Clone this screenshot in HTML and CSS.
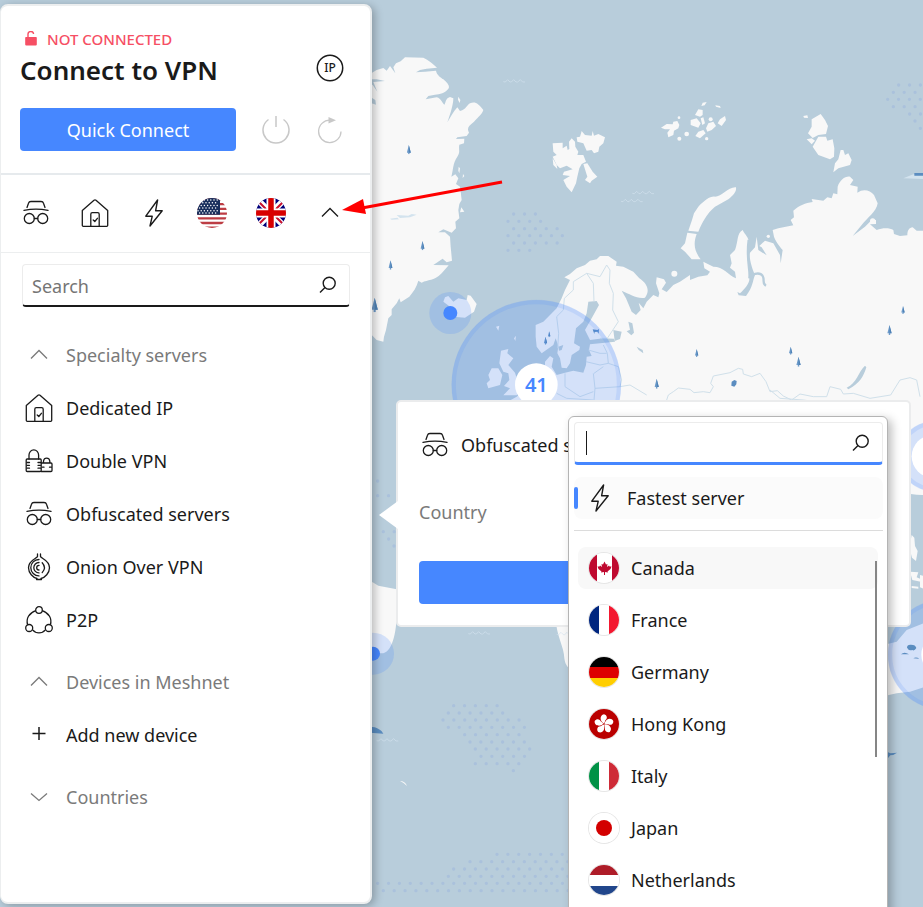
FILE: index.html
```html
<!DOCTYPE html>
<html lang="en">
<head>
<meta charset="utf-8">
<meta name="viewport" content="width=device-width, initial-scale=1">
<title>Connect to VPN</title>
<link rel="stylesheet" href="styles.css">
</head>
<body>

<svg class="defs" aria-hidden="true">
  <defs>
    <clipPath id="disc"><circle cx="16" cy="16" r="15"/></clipPath>
    <symbol id="i-hat" viewBox="0 0 28 28"><g fill="none" stroke="currentColor" stroke-width="1.3" stroke-linecap="round" stroke-linejoin="round"><path d="M5 8.500 6.500 4.200Q7 2.500 9 2.500H19Q21 2.500 21.500 4.200L23 8.500M2 11.400C9 9.900 19 9.900 26 11.400"/><circle cx="7.300" cy="19.500" r="5"/><circle cx="20.700" cy="19.500" r="5"/><path d="M12.300 19.500h3.400"/></g></symbol>
    <symbol id="i-house" viewBox="0 0 28 28"><g fill="none" stroke="currentColor" stroke-width="1.300" stroke-linecap="round" stroke-linejoin="round"><path d="M1.300 11.500V26.500Q1.300 27.300 2.300 27.300H25.700Q26.700 27.300 26.700 26.500V11.500L15 1.200Q14 .4 13 1.200Z"/><path d="M9.800 27V15.200Q9.800 13.700 11.300 13.700H16.700Q18.200 13.700 18.200 15.200V27M12.200 21l1.600 1.500 2.600-3.200"/></g></symbol>
    <symbol id="i-bolt" viewBox="0 0 28 28"><path d="M17.600 1 5.800 17.200 12.200 17.300 10 27 22.200 11.700 15.600 11.800Z" fill="none" stroke="currentColor" stroke-width="1.400" stroke-linejoin="round"/></symbol>
    <symbol id="i-locks" viewBox="0 0 28 28"><g fill="none" stroke="currentColor" stroke-width="1.300" stroke-linecap="round" stroke-linejoin="round"><rect x="1.200" y="12" width="15" height="12.500" rx="1"/><path d="M4 12V8a4.800 5.200 0 0 1 9.600 0V12M2 15.500h2.500M2 18.300h2.500M2 21.200h2.500M13 15.500h2.500M13 18.300h2.500M13 21.200h2.500"/><path d="M16.300 16H26a1 1 0 0 1 1 1v6.500a1 1 0 0 1-1 1H16.300M18.500 16V14a3.200 3.400 0 0 1 6.300 0v2M17.500 20.200h1.500M24.500 20.200h1.500"/></g></symbol>
    <symbol id="i-onion" viewBox="0 0 28 28"><g fill="none" stroke="currentColor" stroke-width="1.300" stroke-linecap="round"><path d="M12.500 1V3.500C12 5.500 3.500 7 3.500 14.800 3.500 20 8 24.500 12 25.500M15.500 1V3.500C16 5.500 24.500 7 24.500 14.800 24.500 20 20 24.500 16 25.500M11.500 26.500h5M14 6.500a8.200 8.200 0 0 0 0 16.400M14 9.500a5.200 5.200 0 0 0 0 10.400M14 12.400a2.300 2.300 0 0 0 0 4.600M17.200 9.800c2.800 3 2.800 6.700 0 9.800"/></g></symbol>
    <symbol id="i-p2p" viewBox="0 0 28 28"><g fill="none" stroke="currentColor" stroke-width="1.300"><circle cx="14" cy="4" r="3.300"/><circle cx="4.200" cy="22" r="3.500"/><circle cx="23.800" cy="22" r="3.500"/><path d="M10.800 4.600C4 7 .800 12.500 2.600 18.800M17.200 4.600C24 7 27.200 12.500 25.400 18.800M7.600 23.800C11 27.800 17 27.800 20.400 23.800"/></g></symbol>
    <symbol id="i-up" viewBox="0 0 28 28"><path d="M6 17.500 14 9.500 22 17.500" fill="none" stroke="currentColor" stroke-width="1.300"/></symbol>
    <symbol id="i-down" viewBox="0 0 28 28"><path d="M6 10.500 14 17.500 22 10.500" fill="none" stroke="currentColor" stroke-width="1.300"/></symbol>
    <symbol id="i-plus" viewBox="0 0 28 28"><path d="M7.500 12.500h13M14 6v13" fill="none" stroke="currentColor" stroke-width="1.500"/></symbol>
    <symbol id="i-search" viewBox="0 0 20 20"><g fill="none" stroke="currentColor" stroke-width="1.400"><circle cx="11.200" cy="8.300" r="6"/><path d="M7 12.500 2 17.500"/></g></symbol>
    <symbol id="f-ca" viewBox="0 0 32 32"><g clip-path="url(#disc)"><path fill="#fff" d="M0 0h32v32H0z"/><path fill="#bf0a30" d="M0 0h9v32H0zM24 0h8v32h-8z"/><path fill="#bf0a30" d="M16.500 9.500 18 12.500 19.500 12 19 15 21 13.500 21.500 14.500 23.500 14.500 22.500 17 19.500 19.500 20 20.500 17 20 17 23H16L16 20 13 20.500 13.500 19.500 10.500 17 9.500 14.500 11.500 14.500 12 13.500 14 15 13.500 12 15 12.500Z"/></g></symbol>
    <symbol id="f-fr" viewBox="0 0 32 32"><g clip-path="url(#disc)"><path fill="#fff" d="M0 0h32v32H0z"/><path fill="#00267f" d="M0 0h11v32H0z"/><path fill="#f31830" d="M21 0h11v32H21z"/></g></symbol>
    <symbol id="f-de" viewBox="0 0 32 32"><g clip-path="url(#disc)"><path d="M0 0h32v11H0z"/><path fill="#d00" d="M0 11h32v11H0z"/><path fill="#ffce00" d="M0 22h32v10H0z"/></g></symbol>
    <symbol id="f-hk" viewBox="0 0 32 32"><g clip-path="url(#disc)"><path fill="#ba0000" d="M0 0h32v32H0z"/><g fill="#fff"><path id="petal" d="M16 15.500C11.500 13 11.500 7 16 6.200 19.500 7 19.500 11 17.500 12 17 13 17 14 16 15.500Z"/><use href="#petal" transform="rotate(72 16 16)"/><use href="#petal" transform="rotate(144 16 16)"/><use href="#petal" transform="rotate(216 16 16)"/><use href="#petal" transform="rotate(288 16 16)"/></g></g></symbol>
    <symbol id="f-it" viewBox="0 0 32 32"><g clip-path="url(#disc)"><path fill="#fff" d="M0 0h32v32H0z"/><path fill="#009246" d="M0 0h11v32H0z"/><path fill="#ce2b37" d="M21 0h11v32H21z"/></g></symbol>
    <symbol id="f-jp" viewBox="0 0 32 32"><circle cx="16" cy="16" r="15" fill="#fff"/><circle cx="16" cy="16" r="8" fill="#d30000"/></symbol>
    <symbol id="f-nl" viewBox="0 0 32 32"><g clip-path="url(#disc)"><path fill="#fff" d="M0 0h32v32H0z"/><path fill="#ae1c28" d="M0 0h32v11H0z"/><path fill="#21468b" d="M0 22h32v10H0z"/></g></symbol>
    <symbol id="f-us" viewBox="0 0 32 32"><g clip-path="url(#disc)"><path fill="#fff" d="M0 0h32v32H0z"/><path stroke="#bd3d44" stroke-width="2.300" d="M0 2.500h32M0 7.200h32M0 11.900h32M0 16.600h32M0 21.300h32M0 26h32M0 30.700h32"/><path fill="#192f5d" d="M0 0h24v17.700H0z"/><path stroke="#fff" stroke-width="1.500" stroke-linecap="round" stroke-dasharray="0 3.200" d="M2 3h21M3.600 5.700h19M2 8.400h21M3.600 11.100h19M2 13.800h21M3.600 16h19"/></g></symbol>
    <symbol id="f-gb" viewBox="0 0 32 32"><g clip-path="url(#disc)"><path fill="#00007a" d="M0 0h32v32H0z"/><path stroke="#fff" stroke-width="6" d="M0 0 32 32M32 0 0 32"/><path stroke="#c8102e" stroke-width="2" d="M0 1 15 16M32 1 17 16M0 31 15 16M32 31 17 16"/><path stroke="#fff" stroke-width="9" d="M16 0v32M0 16h32"/><path stroke="#d80000" stroke-width="5.500" d="M16 0v32M0 16h32"/></g></symbol>
    <symbol id="tree" viewBox="0 0 12 28"><path fill="#6f9ccb" d="M6 0 12 23H8v5H4v-5H0Z"/><path fill="#4f82b6" d="M6 0 12 23H6Z"/></symbol>
    <path id="wave" d="M0 6 6 7 13 0 20 7 24 7 31 0 38 7 43 7 51 0 58 7 65 7"/>
  </defs>
</svg>

<svg class="map" viewBox="-1110 0 2769 2721" preserveAspectRatio="xMinYMin slice" role="img" aria-label="Server map">
  <g class="land">
    <path d="M-20 235 0 222 20 210 40 204 50 212 60 198 76 220 70 202 78 190 92 184 105 172 160 173C175 180 190 192 201 203L170 206 150 210 138 217 165 215 198 212C200 225 212 232 220 238 235 250 240 260 235 266 225 280 210 282 195 284L175 288 167 298 200 292C215 296 215 308 223 314 228 310 225 295 240 291L250 295C250 315 240 345 232 367 240 355 250 335 262 322L270 333C290 328 290 315 300 310 315 303 325 310 340 330 335 345 325 350 312 365 295 378 290 385 297 398L290 408 262 412 258 417 283 416 282 430 268 434C265 450 272 455 262 470 248 490 250 510 244 530L256 523 265 535 258 552 270 560 275 600 268 612 265 630 268 655 256 665 258 685 245 698 220 688 205 697 225 697 240 710 242 740 246 782 230 787 205 765 195 752 210 753 220 775 190 795 236 796 215 820 C190 845 175 838 155 848L145 842C140 862 130 875 118 890L92 907 88 895 80 910 65 928 65 945 55 955 48 990 42 1010 40 1025 20 1020 0 1000-20 990Z"/>
    <path d="M265 290l6 10-2 9-5-10zM266 500l4 5-2 15-3-8zM279 522l4 6-5 6zM268 575l4 5v18l-4-8zM274 622l9 13-13 2z"/>
    <path d="M548 430 578 428 578 445 590 437 593 450 598 447 597 425 605 415 615 425 616 440 625 455 622 465 640 465 648 485 635 492 628 505 622 530 618 550 605 577 590 560 580 540 600 528 578 525 582 515 608 508 590 497 570 505 560 495 548 470 560 465 550 455z"/>
    <path d="M620 412 630 410 635 393 645 405 665 407 668 393 672 407 685 402 705 412 700 430 688 440 685 455 672 460 665 450 650 452 640 430 622 425zM640 492 652 490 668 515 682 530 665 542 660 550 645 540 652 530zM548 475l12 20 2 12-12-12z"/>
    <path d="M497 975 520 965 540 945 560 925 575 895 585 870 600 840 583 832 600 822 620 805 645 795 660 782 680 778 690 768 715 768 740 785 738 797 760 800 790 815 808 835C830 850 842 870 825 893 800 897 780 882 755 872L768 895 785 935 798 945 812 930 806 908 820 925 830 905 850 885 865 892 868 880 858 850 860 832 882 838 888 848 875 868 890 876 910 855 930 845 960 825 960 840 985 830 1012 826 1020 815 1003 805 1000 785 1030 800C1060 800 1075 825 1098 835L1095 815 1080 803 1085 790 1080 765 1095 750C1105 725 1100 700 1118 690 1125 705 1138 712 1136 730 1128 780 1140 810 1138 835 1140 850 1122 870 1110 880L1102 876 1106 886 1128 888C1150 860 1148 840 1155 825 1140 790 1138 770 1140 758L1155 742 1160 710 1165 750 1190 766 1175 742 1168 738 1185 722 1210 730 1230 765 1232 790 1238 750C1225 735 1215 720 1212 710L1208 690 1225 685 1270 676 1262 660 1272 652 1270 632C1290 615 1305 610 1328 606L1325 597 1360 602 1372 592 1385 595 1390 580 1402 583 1403 560C1410 540 1425 528 1440 530L1450 540 1440 555 1463 560 1462 578C1480 565 1500 570 1512 585L1523 610C1520 635 1490 655 1475 675L1448 708 1485 680 1505 660 1518 660 1518 672 1500 673 1520 690 C1540 682 1560 684 1570 690L1572 702 1590 708 1612 706C1612 690 1618 683 1628 682L1640 692 1800 692 1800 1500 1620 1500 1560 1400 440 1400 440 1230 400 1212 440 1190 500 1130 525 1110 525 1085 540 1068 550 1075 545 1100 560 1125 585 1118 610 1112 640 1118 648 1095 650 1070 665 1068 657 1050 660 1033 735 1025 732 1016 700 1015 660 1020 645 990 665 955 687 915 680 903 655 905 650 940 640 965 618 985 612 1030 630 1040 628 1050 605 1065 600 1090 590 1105 575 1103 570 1075 562 1060 565 1038 557 1015 550 1035 515 1060 500 1040 497 1010Z"/>
    <path d="M1098 562C1100 575 1090 585 1075 598L1035 620C1010 640 995 670 985 695L955 692 966 660 972 640 985 620C1005 600 1020 588 1035 590 1055 590 1075 560 1098 562zM952 698 980 702C968 735 975 755 992 778L965 778 945 755 932 745 945 730z"/>
    <path d="M1352 342 1365 360 1374 378 1368 402 1345 405 1328 414 1314 400 1325 380 1325 358zM1345 410 1368 410 1372 422 1388 418 1393 445 1392 470 1380 478 1345 465 1328 440zM1412 450 1420 450 1425 465 1435 460 1445 480 1440 495 1405 505 1390 517 1395 490 1405 478zM1310 418 1325 415 1335 422 1325 433zM1300 348l12-2 2 8-12-1z"/>
    <path d="M873 383 890 372 908 373 910 365 922 363 928 375 925 385 912 392 910 405 895 412 892 398 900 388 885 388zM975 345 985 328 998 330 998 345 990 350zM962 360 980 355 992 370 985 383 962 375zM992 355l8-3 5 18-8 5zM1008 385 1015 370 1030 365 1038 378 1025 390 1012 395zM1043 370 1050 358 1065 348 1068 360 1055 378zM976 408 985 395 1000 390 1007 400 990 415zM998 308l12-2-6 10-10 2zM1036 316l14 2 2 6-14-4z"/>
    <circle cx="950" cy="402" r="7"/><circle cx="1010" cy="416" r="5"/><circle cx="928" cy="416" r="6"/><circle cx="927" cy="353" r="4"/><circle cx="1022" cy="358" r="6"/><circle cx="913" cy="821" r="9"/><circle cx="1195" cy="709" r="5"/><circle cx="1508" cy="663" r="8"/>
    <path d="M220 905 225 892 235 888 250 905 265 895 290 900 293 885 302 887 320 912 312 935 285 953 250 950 225 930 240 920z"/>
    <path d="M393 1052 415 1047 412 1060 430 1075 415 1095 435 1118 445 1150 455 1170 440 1186 400 1186 420 1165 402 1158 418 1140 415 1120 400 1115 388 1090zM355 1125 365 1105 385 1105 397 1125 390 1155 355 1165 350 1150 360 1140zM378 980l10-3-3 15zM432 1015l6-8-2 16z"/>
    <path d="M-20 1745 8 1747 25 1757 80 1768C85 1870 75 1950 40 1960L-20 1960ZM558 1850C555 1900 583 1940 583 1975 586 2000 597 2000 600 2015H900V1850Z"/>
  </g>
  <path class="water" d="M730 990l25 5-5 22-16 6zM775 965l12 5 5 28-8 8-14-12 10-5zM800 1040l18 10 2 10-14-10zM-20 238 20 238 45 243 10 246 22 275 8 255zM0 290l16 10 2 14-18-6zM1485 1097l4 5C1480 1130 1470 1150 1435 1168L1430 1163C1460 1150 1465 1115 1485 1097zM565 1040l15-5-5 15-8 2z"/>
  <path class="inlet" d="M1145 825Q1170 815 1178 828C1185 840 1175 850 1188 857M1136 720C1128 780 1142 810 1138 835"/>
  <path class="borders" d="M563 1045 566 1000 560 950 580 930 583 895 610 870 610 845 650 820 670 850 672 905M650 820 690 830 710 795 720 810 718 850 730 880 728 930 745 965 712 1015 690 1015M700 1035 712 1060 715 1090 745 1100 755 1140 750 1160 675 1165 672 1200M655 1050 690 1060 710 1060M648 1085 690 1095 715 1090M670 1120 675 1165M700 1100 672 1120M585 1120 585 1160 630 1190 670 1175M560 1180 590 1195 670 1200M750 1160 780 1155 830 1185"/>
  <path class="borders" d="M890 1200 895 1185 910 1175 925 1164 960 1168 972 1178 1000 1175 1020 1178 1030 1160 1022 1150 1030 1128 1080 1118 1105 1105 1118 1108 1120 1122 1145 1130 1170 1120 1188 1145 1200 1175 1222 1172 1240 1188 1265 1200 1290 1182 1330 1190 1370 1190 1380 1160 1412 1168 1420 1182 1450 1180 1500 1195 1562 1185 1590 1140 1620 1133 1640 1140 1650 1190M860 1200 905 1250M1200 1170 1230 1195 1300 1200 1370 1210"/>
  <path class="dots" d="M431 642h66M414 664h99M431 686h131M414 707h164M431 729h131M414 751h66M251 2117h131M235 2139h164M219 2160h229M235 2182h229M284 2204h164M300 2226h164M316 2247h164M333 2269h131M316 2291h131M430 2312h1M381 2563h300M300 2585h300M251 2607h400M235 2629h400M23 2650h600M40 2672h600M1586 255h66M1570 277h66M1553 298h99M1570 320h99M1619 342h34M1635 363h1M1651 385h1M23 1443h1M23 1487h34M40 1595h34M56 1617h1M72 1638h1M1652 2433h1M1636 2455h1M1571 2476h66M1587 2498h66M1571 2520h66M1587 2541h66M1571 2563h66M1587 2585h66M1571 2606h66M1587 2628h66M1571 2650h66M1571 2672h66"/>
  <g class="waves"><use href="#wave" x="400" y="239"/><use href="#wave" x="787" y="574"/><use href="#wave" x="753" y="598"/><use href="#wave" x="295" y="1895"/><use href="#wave" x="20" y="2216"/><use href="#wave" x="560" y="1897"/></g>
  <path fill="#d3e3ee" d="M60 656l22-3 5 5-22 1zM80 645l35 2 10-5 15 2-20 8-30 2zM1600 535l30-12h30v14z"/>
  <path fill="#5b8dc0" d="M1633 519h30v8h-30zM1085 1145l8-5 7 3-1 10-6 7-9-3zM668 988l14 2 5-3-1 14-4-6-8 1-1 6-3-8zM0 2180C20 2180 35 2190 40 2201L20 2200 0 2198Z"/>
  <path fill="#f8f8f8" d="M90 2343q15 0 21 15-6-8-21-15z"/>
  <g><use href="#tree" x="110" y="435" width="13" height="28"/><use href="#tree" x="151" y="723" width="13" height="28"/><use href="#tree" x="55" y="781" width="13" height="28"/><use href="#tree" x="4" y="893" width="20" height="44"/><use href="#tree" x="521" y="1010" width="11" height="24"/><use href="#tree" x="533" y="994" width="9" height="18"/><use href="#tree" x="1593" y="918" width="12" height="24"/><use href="#tree" x="1551" y="975" width="15" height="30"/><use href="#tree" x="1256" y="1040" width="12" height="24"/><use href="#tree" x="1278" y="1070" width="15" height="30"/><use href="#tree" x="974" y="1047" width="12" height="24"/><use href="#tree" x="853" y="1136" width="14" height="30"/></g>
  <path class="water" d="M1500 1440Q1620 1500 1700 1480V2721H1540V2060H1500Z"/>
  <path class="land" d="M1625 1605l8 8 2 25 8 15-5 30-12-10-8-30zM1620 1715l25 2-5 15 12 5v8l-25-5zM1650 1725l20 5v40l-20-8zM1625 1758l20 2v6l-20-2zM1540 1935 1580 1925 1610 1890 1660 1870 1700 1890V2050L1620 2075 1580 2080 1540 2089Z"/>
  <g fill="#4687ff">
    <g fill-opacity=".2"><circle cx="241" cy="939" r="63"/><circle cx="499" cy="1154" r="254"/><circle cx="9" cy="1961" r="63"/><circle cx="1689" cy="1369" r="104"/><circle cx="1718" cy="1964" r="164"/></g>
    <circle cx="241" cy="939" r="21"/><circle cx="9" cy="1961" r="21"/>
    <g class="rings"><circle cx="499" cy="1154" r="248"/><circle cx="1689" cy="1369" r="98"/><circle cx="1718" cy="1964" r="158"/></g>
  </g>
  <path fill="#5b8dc0" d="M1593 1963q10-10 24 0zM1630 1975q8-6 18 1zM1611 1943q0-10 12-9 14 0 16 10-6 10-12 6-10 4-16-7zM1551 2255l10 5 20-2q-10 8-20 8l-10 12z"/>
  <g fill="#fff"><circle cx="499" cy="1154" r="64"/><circle cx="1689" cy="1369" r="64"/><circle cx="1718" cy="1964" r="64"/></g>
  <text class="cluster" x="499" y="1176" text-anchor="middle">41</text>
</svg>

<main class="app">
  <section class="panel">
    <header class="head">
      <div class="status"><svg viewBox="0 0 12 16" aria-hidden="true"><path d="M1 6h10a.8.8 0 0 1 .8.800V13.500a1 1 0 0 1-1 1H1.200a1 1 0 0 1-1-1V6.800A.8.8 0 0 1 1 6z" fill="currentColor"/><path d="M3 6.500V3.600A2.800 2.800 0 0 1 8.600 3" fill="none" stroke="currentColor" stroke-width="1.400"/></svg>NOT CONNECTED</div>
      <div class="title-row">
        <h1>Connect to VPN</h1>
        <button class="icon-btn" aria-label="IP address"><svg viewBox="0 0 28 28"><circle cx="14" cy="14" r="12.700" fill="none" stroke="currentColor" stroke-width="1.500"/><text class="ip" x="14" y="18" text-anchor="middle">IP</text></svg></button>
      </div>
      <div class="action-row">
        <button class="primary">Quick Connect</button>
        <button class="icon-btn muted" aria-label="Disconnect"><svg viewBox="0 0 28 28"><path d="M6.500 3.500A13 13 0 1 0 21.500 3.500M14 0V11" fill="none" stroke="currentColor" stroke-width="1.500"/></svg></button>
        <button class="icon-btn muted" aria-label="Reconnect"><svg viewBox="0 0 28 28"><path d="M25 15.500A11.200 11.200 0 1 1 14 4.200" fill="none" stroke="currentColor" stroke-width="1.300"/><path d="M12.500 1 20 4.200 12.500 7.500Z" fill="currentColor"/></svg></button>
      </div>
    </header>

    <nav class="shortcuts" aria-label="Shortcuts">
      <button class="icon-btn" aria-label="Obfuscated servers"><svg><use href="#i-hat"/></svg></button>
      <button class="icon-btn" aria-label="Dedicated IP"><svg><use href="#i-house"/></svg></button>
      <button class="icon-btn" aria-label="Fastest server"><svg><use href="#i-bolt"/></svg></button>
      <button class="icon-btn" aria-label="United States"><svg class="flag"><use href="#f-us"/></svg></button>
      <button class="icon-btn" aria-label="United Kingdom"><svg class="flag"><use href="#f-gb"/></svg></button>
      <button class="icon-btn" aria-label="Collapse"><svg><use href="#i-up"/></svg></button>
    </nav>

    <div class="search">
      <input type="text" placeholder="Search" aria-label="Search">
      <svg aria-hidden="true"><use href="#i-search"/></svg>
    </div>

    <div class="list">
      <button class="row group"><svg><use href="#i-up"/></svg>Specialty servers</button>
      <button class="row"><svg><use href="#i-house"/></svg>Dedicated IP</button>
      <button class="row"><svg><use href="#i-locks"/></svg>Double VPN</button>
      <button class="row"><svg><use href="#i-hat"/></svg>Obfuscated servers</button>
      <button class="row"><svg><use href="#i-onion"/></svg>Onion Over VPN</button>
      <button class="row"><svg><use href="#i-p2p"/></svg>P2P</button>
      <button class="row group"><svg><use href="#i-up"/></svg>Devices in Meshnet</button>
      <button class="row"><svg><use href="#i-plus"/></svg>Add new device</button>
      <button class="row group"><svg><use href="#i-down"/></svg>Countries</button>
    </div>
  </section>

  <section class="popover">
    <h2><svg aria-hidden="true"><use href="#i-hat"/></svg>Obfuscated servers</h2>
    <div class="field">
      <label for="country">Country</label>
      <div class="picker">
        <select id="country"></select>
        <div class="menu">
          <div class="menu-search">
            <input type="text" aria-label="Search countries">
            <span class="caret"></span>
            <svg aria-hidden="true"><use href="#i-search"/></svg>
          </div>
          <button class="fastest"><svg><use href="#i-bolt"/></svg>Fastest server</button>
          <div class="options">
            <button class="option current"><svg><use href="#f-ca"/></svg>Canada</button>
            <button class="option"><svg><use href="#f-fr"/></svg>France</button>
            <button class="option"><svg><use href="#f-de"/></svg>Germany</button>
            <button class="option"><svg><use href="#f-hk"/></svg>Hong Kong</button>
            <button class="option"><svg><use href="#f-it"/></svg>Italy</button>
            <button class="option"><svg><use href="#f-jp"/></svg>Japan</button>
            <button class="option"><svg><use href="#f-nl"/></svg>Netherlands</button>
            <span class="thumb"></span>
          </div>
        </div>
      </div>
    </div>
    <button class="primary" aria-label="Connect"></button>
  </section>
</main>

<svg class="arrow" viewBox="0 0 162 36" aria-hidden="true"><path d="M20 29 160 3" stroke="#f00" stroke-width="3"/><path d="M0 31 21 20 24 35Z" fill="#f00"/></svg>

</body>
</html>
```
FILE: styles.css
```css
* { box-sizing: border-box; }

body {
  margin: 0;
  height: 100vh;
  overflow: hidden;
  background: #b8cddb;
  color: #1a1a1a;
  font: 18px/24px "Noto Sans", "Open Sans", sans-serif;
}

button, input, select {
  font: inherit;
  color: inherit;
  border: 0;
  background: none;
  padding: 0;
  margin: 0;
}

.defs { position: absolute; width: 0; height: 0; }

/* Map */
.map { position: absolute; inset: 0; width: 100%; height: 100%; }
.land { fill: #f8f8f8; }
.water { fill: #b8cddb; }
.inlet { fill: none; stroke: #b8cddb; stroke-width: 7; }
.borders { fill: none; stroke: #d0e0ea; stroke-width: 3; stroke-linejoin: round; }
.dots { fill: none; stroke: #aac1dc; stroke-width: 10; stroke-linecap: round; stroke-dasharray: 0 32.6; }
.waves { fill: none; stroke: #d3e3ee; stroke-width: 2; }
.rings { fill: none; stroke: #4687ff; stroke-opacity: .14; stroke-width: 13; }
.cluster { font-size: 60px; font-weight: 600; fill: #4687ff; }

/* Layout */
.app {
  position: relative;
  display: flex;
  height: 100%;
  padding: 4px 12px 3px 0;
}

.primary {
  height: 43px;
  padding-top: 1px;
  border-radius: 4px;
  background: #4687ff;
  color: #fff;
}

/* Side panel */
.panel {
  flex: 0 0 372px;
  border: 2px solid #eceeef;
  border-left-width: 1px;
  border-radius: 8px;
  background: #fff;
  box-shadow: 3px 2px 8px rgba(0, 0, 0, .25);
}

.head {
  padding: 21px 26px 22px 19px;
  border-bottom: 2px solid #e6eaed;
}

.status {
  display: flex;
  align-items: center;
  gap: 10px;
  padding-left: 5px;
  color: #f64f64;
  font-size: 15px;
  font-weight: 500;
}
.status svg { width: 12px; height: 16px; }

.title-row, .action-row { display: flex; align-items: center; }
.title-row { justify-content: space-between; height: 38px; }
.title-row .icon-btn { margin-bottom: 4px; }

h1 { margin: 0; font-size: 26px; font-weight: 600; line-height: 38px; }

.icon-btn {
  display: grid;
  place-items: center;
  width: 28px;
  height: 28px;
}
.icon-btn svg { width: 28px; height: 28px; }
.icon-btn .flag { width: 32px; height: 32px; margin: -2px; }

.ip { font-size: 12px; font-weight: 500; fill: #1a1a1a; }

.action-row { gap: 26px; margin-top: 19px; }
.action-row .primary { flex: 1; }
.muted { color: #c8c8c8; }

.shortcuts {
  display: flex;
  align-items: center;
  justify-content: space-between;
  height: 78px;
  padding: 0 26px 2px 21px;
  border-bottom: 1px solid #eceeef;
}

.search {
  display: flex;
  align-items: center;
  height: 43px;
  margin: 11px 20px 21px 21px;
  padding: 0 11px 0 9px;
  border: 1px solid #ececec;
  border-bottom: 2px solid #1a1a1a;
  border-radius: 4px;
}
.search input, .menu-search input { flex: 1; min-width: 0; height: 38px; outline: 0; }
.search input { padding-top: 2px; }
.search input::placeholder { color: #757575; opacity: 1; }
.search svg, .menu-search svg { width: 20px; height: 20px; }

.list { display: flex; flex-direction: column; }

.row {
  display: flex;
  align-items: center;
  gap: 13px;
  height: 53px;
  padding: 0 24px;
  text-align: left;
}
.row svg { width: 28px; height: 28px; }
.group { color: #7a7a7a; }
.row + .group { margin-top: 9px; }

/* Server popover */
.popover {
  position: relative;
  flex: 1;
  align-self: flex-start;
  margin: 396px 0 0 24px;
  padding: 30px 21px 21px;
  border: 2px solid #ebeced;
  border-radius: 5px;
  background: #fff;
}
.popover::before {
  content: "";
  position: absolute;
  left: -19px;
  top: 99px;
  width: 19px;
  height: 28px;
  background: #fff;
  clip-path: polygon(100% 0, 100% 100%, 0 50%);
}
.popover h2 {
  display: flex;
  align-items: center;
  gap: 12px;
  height: 26px;
  margin: 0;
  padding-left: 2px;
  font-size: 18px;
  font-weight: 400;
}
.popover h2 svg { width: 28px; height: 28px; }

.field {
  display: flex;
  align-items: center;
  justify-content: space-between;
  height: 38px;
  margin: 35px 0 30px;
}
.field label { color: #7a7a7a; }
.popover > .primary { display: block; width: 100%; }

.picker { position: relative; flex: 0 0 320px; }
.picker select {
  display: block;
  width: 100%;
  height: 38px;
  border: 1px solid #9a9a9a;
  border-radius: 4px;
  appearance: none;
}

/* Country menu */
.menu {
  position: absolute;
  top: -77px;
  left: 0;
  width: 100%;
  height: 520px;
  padding: 5px 4px 4px 5px;
  border: 1px solid #b4b4b4;
  border-radius: 6px;
  background: #fff;
  box-shadow: 4px 3px 10px rgba(0, 0, 0, .25);
}

.menu-search {
  position: relative;
  display: flex;
  align-items: center;
  height: 43px;
  padding: 0 11px;
  border: 1px solid #ececec;
  border-bottom: 3px solid #4687ff;
  border-radius: 4px;
}
.menu-search .caret {
  position: absolute;
  left: 11px;
  top: 8px;
  width: 1px;
  height: 24px;
  background: #1a1a1a;
}

.fastest {
  position: relative;
  display: flex;
  align-items: center;
  gap: 13px;
  width: 100%;
  height: 42px;
  margin: 12px 0 11px;
  padding-left: 12px;
  border-radius: 8px;
  background: #fbfbfb;
}
.fastest svg { width: 28px; height: 28px; }
.fastest::before {
  content: "";
  position: absolute;
  left: 0;
  top: 10px;
  width: 4px;
  height: 22px;
  border-radius: 2px;
  background: #4687ff;
}

.options {
  position: relative;
  display: flex;
  flex-direction: column;
  gap: 10px;
  padding: 16px 5px 0 4px;
  border-top: 1px solid #dcdcdc;
}
.option {
  display: flex;
  align-items: center;
  gap: 11px;
  height: 42px;
  padding-left: 10px;
  border-radius: 8px;
}
.option svg { width: 32px; height: 32px; border-radius: 50%; box-shadow: inset 0 0 0 1px #e6e6e6; }
.current { background: #f8f8f8; }
.thumb {
  position: absolute;
  right: 6px;
  top: 30px;
  width: 2px;
  height: 196px;
  background: #868686;
}

/* Pointer arrow */
.arrow { position: absolute; left: 342px; top: 179px; width: 162px; height: 36px; }
```
